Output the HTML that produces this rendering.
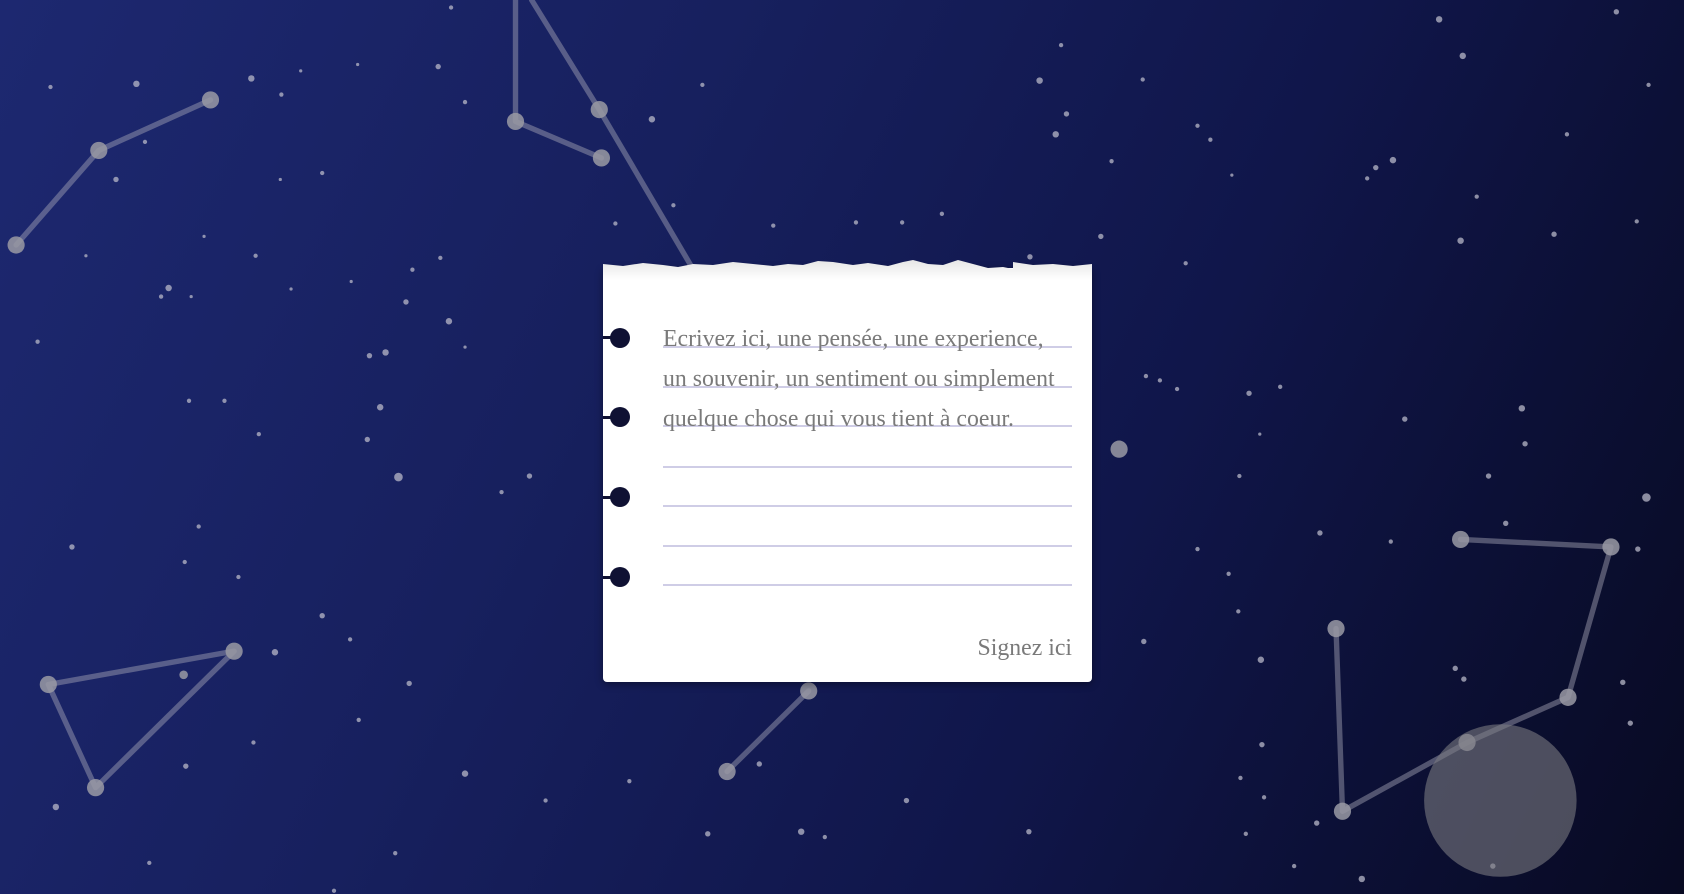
<!DOCTYPE html>
<html><head><meta charset="utf-8"><style>
html,body{margin:0;padding:0;width:1684px;height:894px;overflow:hidden}
body{background:linear-gradient(115deg,#1d2870 0%,#17205e 35%,#10164a 65%,#080a22 100%);position:relative;font-family:"Liberation Serif",serif}
svg.bg{position:absolute;left:0;top:0}
.card{position:absolute;left:603px;top:268px;width:489px;height:414px;background:#fff;border-radius:0 0 4px 4px;box-shadow:0 2px 8px rgba(0,0,0,.4)}
.torn{position:absolute;left:603px;top:256px}
.line{position:absolute;left:663px;width:409px;height:2px;background:#cfcde6}
.dot{position:absolute;left:610px;width:20px;height:20px;border-radius:50%;background:#0f1133}
.stub{position:absolute;left:603px;width:12px;height:3px;background:#0f1133}
.txt{position:absolute;left:663px;top:319px;font-size:23.8px;line-height:40px;color:#7a7a7a;white-space:nowrap}
.sign{position:absolute;right:612px;top:635px;font-size:23.8px;color:#7a7a7a}
</style></head><body>
<svg class="bg" width="1684" height="894" viewBox="0 0 1568 832" preserveAspectRatio="none">
<g fill="#b8b8c8" opacity=".75">
<circle cx="47" cy="81" r="2"/><circle cx="127" cy="78" r="3"/><circle cx="234" cy="73" r="3"/><circle cx="262" cy="88" r="2"/><circle cx="280" cy="66" r="1.5"/><circle cx="333" cy="60" r="1.5"/><circle cx="408" cy="62" r="2.5"/><circle cx="420" cy="7" r="2"/><circle cx="433" cy="95" r="2"/><circle cx="607" cy="111" r="3"/><circle cx="654" cy="79" r="2"/><circle cx="108" cy="167" r="2.5"/><circle cx="135" cy="132" r="2"/><circle cx="261" cy="167" r="1.5"/><circle cx="300" cy="161" r="2"/><circle cx="190" cy="220" r="1.5"/><circle cx="80" cy="238" r="1.5"/><circle cx="238" cy="238" r="2"/><circle cx="157" cy="268" r="3"/><circle cx="150" cy="276" r="2"/><circle cx="178" cy="276" r="1.5"/><circle cx="271" cy="269" r="1.5"/><circle cx="327" cy="262" r="1.5"/><circle cx="384" cy="251" r="2"/><circle cx="410" cy="240" r="2"/><circle cx="378" cy="281" r="2.5"/><circle cx="418" cy="299" r="3"/><circle cx="35" cy="318" r="2"/><circle cx="359" cy="328" r="3"/><circle cx="344" cy="331" r="2.5"/><circle cx="433" cy="323" r="1.5"/><circle cx="176" cy="373" r="2"/><circle cx="209" cy="373" r="2"/><circle cx="354" cy="379" r="3"/><circle cx="342" cy="409" r="2.5"/><circle cx="241" cy="404" r="2"/><circle cx="371" cy="444" r="4"/><circle cx="493" cy="443" r="2.5"/><circle cx="467" cy="458" r="2"/><circle cx="185" cy="490" r="2"/><circle cx="67" cy="509" r="2.5"/><circle cx="172" cy="523" r="2"/><circle cx="222" cy="537" r="2"/><circle cx="300" cy="573" r="2.5"/><circle cx="326" cy="595" r="2"/><circle cx="256" cy="607" r="3"/><circle cx="381" cy="636" r="2.5"/><circle cx="334" cy="670" r="2"/><circle cx="236" cy="691" r="2"/><circle cx="173" cy="713" r="2.5"/><circle cx="52" cy="751" r="3"/><circle cx="433" cy="720" r="3"/><circle cx="508" cy="745" r="2"/><circle cx="586" cy="727" r="2"/><circle cx="707" cy="711" r="2.5"/><circle cx="659" cy="776" r="2.5"/><circle cx="746" cy="774" r="3"/><circle cx="768" cy="779" r="2"/><circle cx="844" cy="745" r="2.5"/><circle cx="958" cy="774" r="2.5"/><circle cx="988" cy="42" r="2"/><circle cx="968" cy="75" r="3"/><circle cx="993" cy="106" r="2.5"/><circle cx="983" cy="125" r="3"/><circle cx="1064" cy="74" r="2"/><circle cx="1115" cy="117" r="2"/><circle cx="1127" cy="130" r="2"/><circle cx="1035" cy="150" r="2"/><circle cx="1147" cy="163" r="1.5"/><circle cx="1297" cy="149" r="3"/><circle cx="1281" cy="156" r="2.5"/><circle cx="1273" cy="166" r="2"/><circle cx="1362" cy="52" r="3"/><circle cx="1340" cy="18" r="3"/><circle cx="1505" cy="11" r="2.5"/><circle cx="1535" cy="79" r="2"/><circle cx="1459" cy="125" r="2"/><circle cx="1375" cy="183" r="2"/><circle cx="1360" cy="224" r="3"/><circle cx="1447" cy="218" r="2.5"/><circle cx="1524" cy="206" r="2"/><circle cx="1104" cy="245" r="2"/><circle cx="1067" cy="350" r="2"/><circle cx="1080" cy="354" r="2"/><circle cx="1096" cy="362" r="2"/><circle cx="1163" cy="366" r="2.5"/><circle cx="1192" cy="360" r="2"/><circle cx="1308" cy="390" r="2.5"/><circle cx="1417" cy="380" r="3"/><circle cx="1420" cy="413" r="2.5"/><circle cx="1386" cy="443" r="2.5"/><circle cx="1533" cy="463" r="4"/><circle cx="1229" cy="496" r="2.5"/><circle cx="1115" cy="511" r="2"/><circle cx="1295" cy="504" r="2"/><circle cx="1402" cy="487" r="2.5"/><circle cx="1525" cy="511" r="2.5"/><circle cx="1153" cy="569" r="2"/><circle cx="1065" cy="597" r="2.5"/><circle cx="1174" cy="614" r="3"/><circle cx="1355" cy="622" r="2.5"/><circle cx="1363" cy="632" r="2.5"/><circle cx="1511" cy="635" r="2.5"/><circle cx="1518" cy="673" r="2.5"/><circle cx="1175" cy="693" r="2.5"/><circle cx="1155" cy="724" r="2"/><circle cx="1177" cy="742" r="2"/><circle cx="1226" cy="766" r="2.5"/><circle cx="1160" cy="776" r="2"/><circle cx="1268" cy="818" r="3"/><circle cx="1205" cy="806" r="2"/><circle cx="1390" cy="806" r="2.5"/><circle cx="1144" cy="534" r="2"/><circle cx="1154" cy="443" r="2"/><circle cx="1173" cy="404" r="1.5"/><circle cx="573" cy="208" r="2"/><circle cx="627" cy="191" r="2"/><circle cx="720" cy="210" r="2"/><circle cx="797" cy="207" r="2"/><circle cx="840" cy="207" r="2"/><circle cx="877" cy="199" r="2"/><circle cx="1025" cy="220" r="2.5"/><circle cx="959" cy="239" r="2.5"/><circle cx="311" cy="829" r="2"/><circle cx="139" cy="803" r="2"/><circle cx="368" cy="794" r="2"/></g>
<g stroke="#a8a8b8" stroke-opacity=".45" stroke-width="5" fill="none" stroke-linejoin="round" stroke-linecap="round">
<polyline points="15,228 92,140 196,93"/>
<polyline points="480,0 480,113 560,147"/>
<polyline points="495,0 558,102 645,250"/>
<polygon points="45,637 218,606 89,733"/>
<polyline points="677,718 753,643"/>
<polyline points="1360,502 1500,509 1460,649 1366,691 1250,755 1244,585"/>
</g>
<g fill="#9a9aa4" opacity=".85">
<circle cx="15" cy="228" r="8"/><circle cx="92" cy="140" r="8"/><circle cx="196" cy="93" r="8"/>
<circle cx="480" cy="113" r="8"/><circle cx="560" cy="147" r="8"/><circle cx="558" cy="102" r="8"/>
<circle cx="45" cy="637" r="8"/><circle cx="218" cy="606" r="8"/><circle cx="89" cy="733" r="8"/><circle cx="171" cy="628" r="4"/>
<circle cx="677" cy="718" r="8"/><circle cx="753" cy="643" r="8"/>
<circle cx="1360" cy="502" r="8"/><circle cx="1500" cy="509" r="8"/><circle cx="1460" cy="649" r="8"/><circle cx="1366" cy="691" r="8"/><circle cx="1250" cy="755" r="8"/><circle cx="1244" cy="585" r="8"/>
<circle cx="1042" cy="418" r="8"/></g>
<circle cx="1397" cy="745" r="71" fill="#7a7a80" opacity=".6"/>
</svg>
<div class="card"></div>
<svg class="torn" width="489" height="24" viewBox="0 0 489 24"><defs><linearGradient id="g" x1="0" y1="0" x2="0" y2="1"><stop offset="0" stop-color="#e6e6e6"/><stop offset="1" stop-color="#fff"/></linearGradient></defs><path d="M0,8 L20,10 40,7 60,9 75,11 90,8 110,9 130,6 150,8 170,10 185,8 200,9 215,5 230,6 250,9 265,7 285,10 300,6 310,4 325,8 340,9 355,4 370,8 385,12 400,11 410,13 410,6 430,9 450,8 470,10 489,8 L489,24 0,24Z" fill="url(#g)"/></svg>
<div class="line" style="top:346px"></div><div class="line" style="top:386px"></div><div class="line" style="top:425px"></div><div class="line" style="top:466px"></div><div class="line" style="top:505px"></div><div class="line" style="top:545px"></div><div class="line" style="top:584px"></div>
<div class="stub" style="top:336px"></div><div class="dot" style="top:328px"></div>
<div class="stub" style="top:416px"></div><div class="dot" style="top:407px"></div>
<div class="stub" style="top:496px"></div><div class="dot" style="top:487px"></div>
<div class="stub" style="top:576px"></div><div class="dot" style="top:567px"></div>
<div class="txt">Ecrivez ici, une pensée, une experience,<br>un souvenir, un sentiment ou simplement<br>quelque chose qui vous tient à coeur.</div>
<div class="sign">Signez ici</div>
</body></html>
